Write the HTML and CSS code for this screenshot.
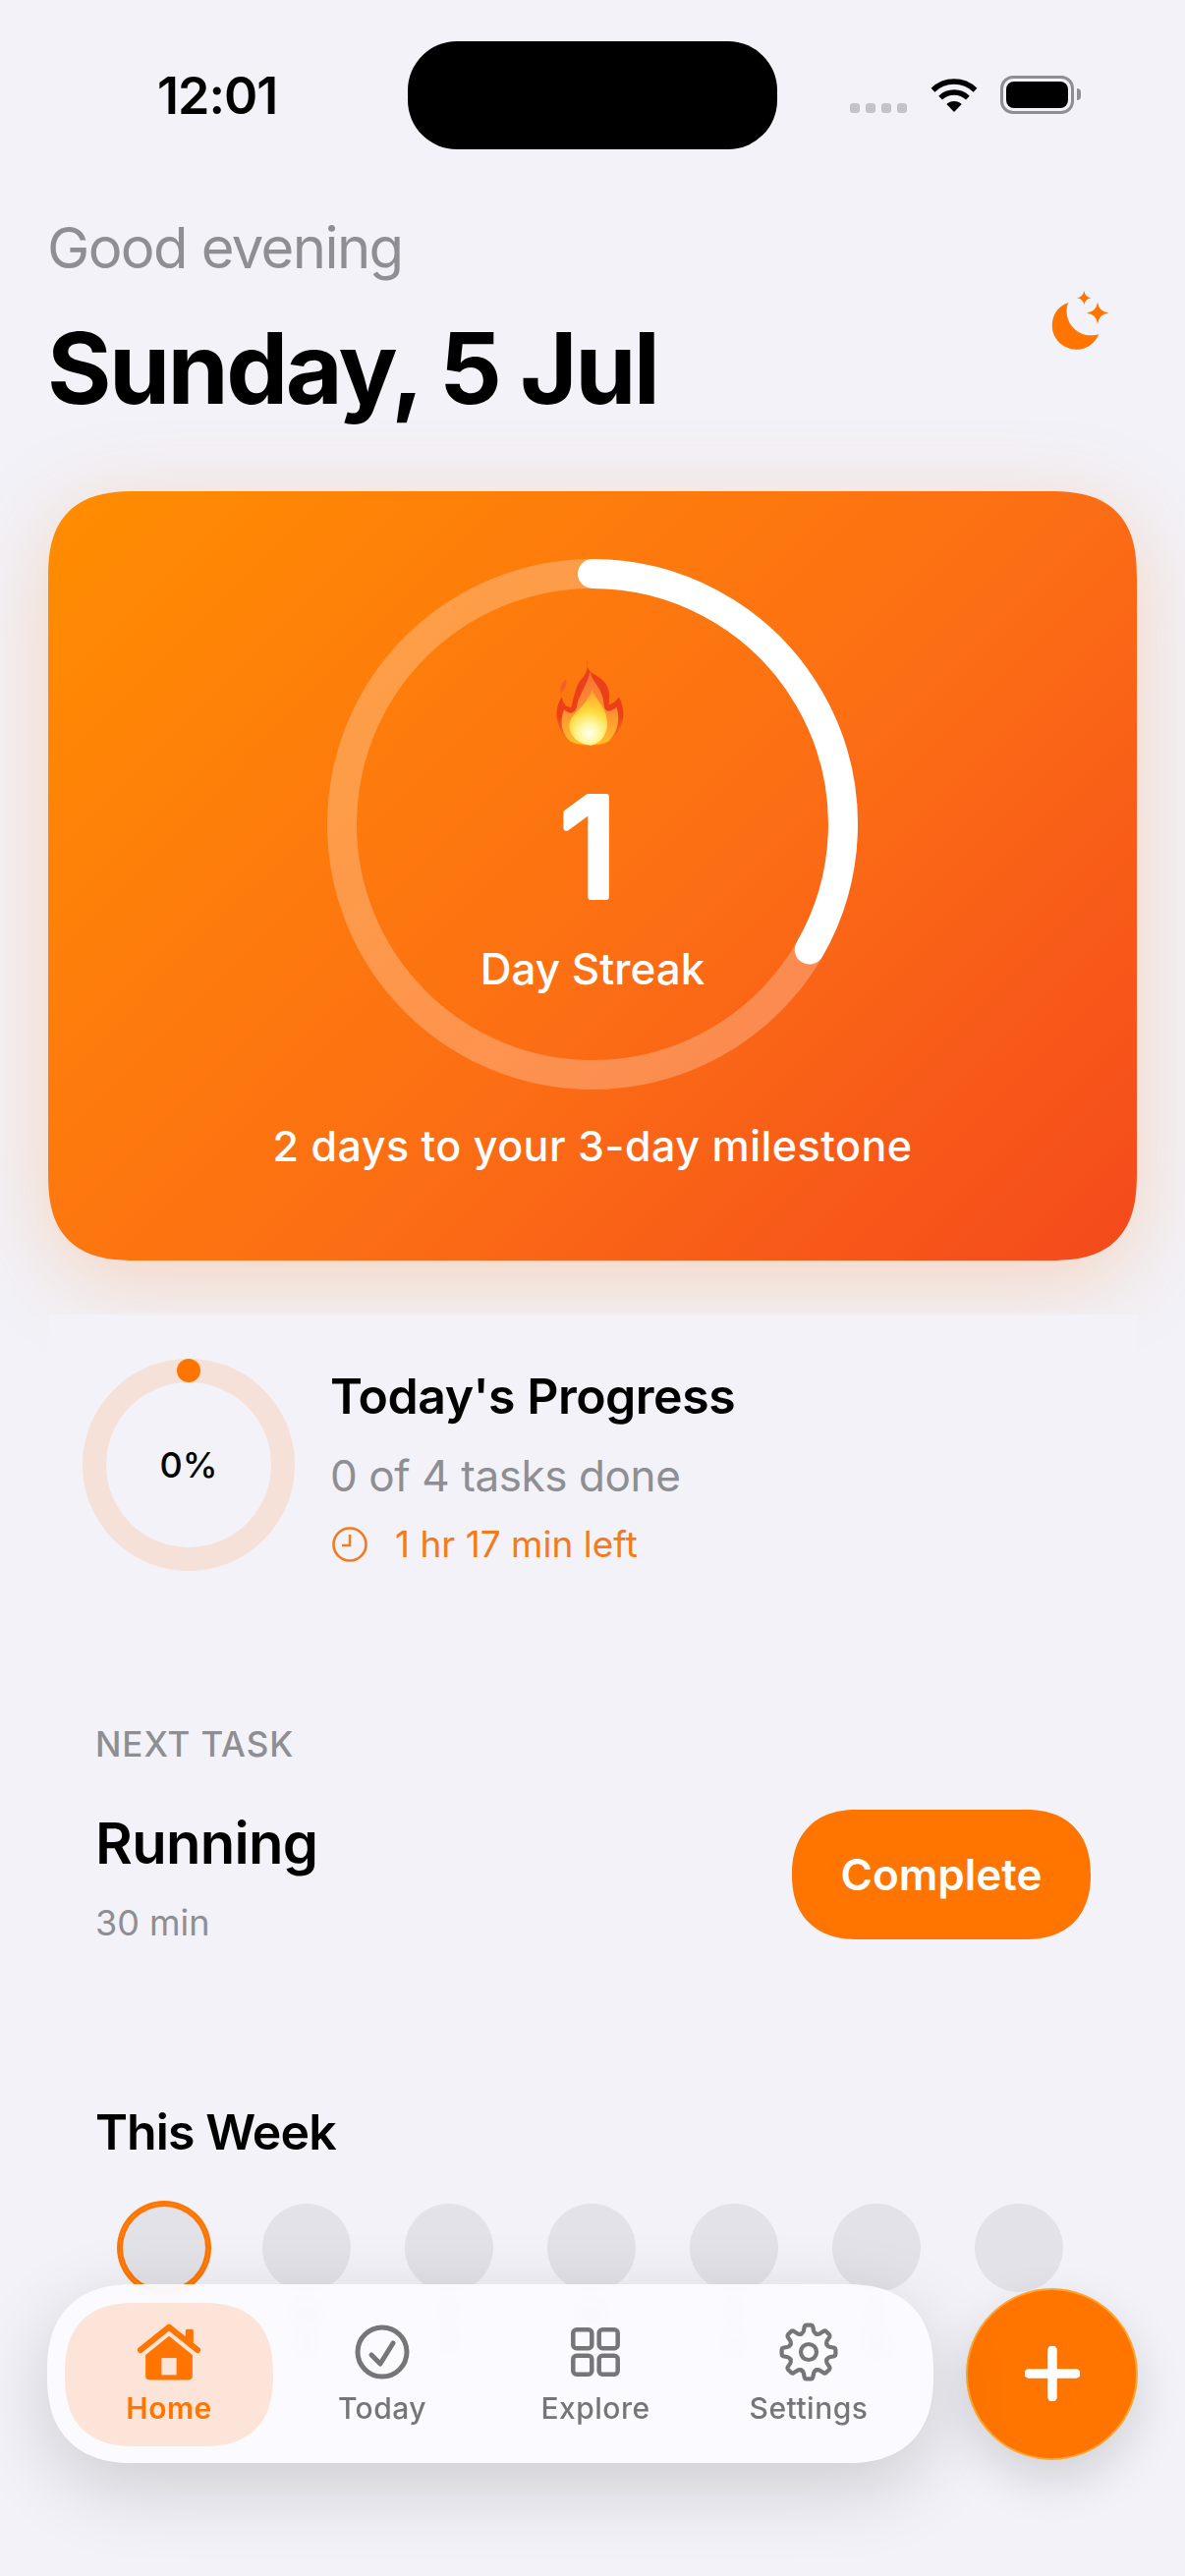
FILE: index.html
```html
<!DOCTYPE html>
<html lang="en">
<head>
<meta charset="utf-8">
<title>Home</title>
<link rel="stylesheet" href="styles.css">
</head>
<body>
<div class="screen">
  <div class="status">
    <div class="status-time">12:01</div>
    <div class="island"></div>
    <div class="status-right">
      <div class="signal"><i></i><i></i><i></i><i></i></div>
      <svg class="wifi" viewBox="0 0 52 38"><path d="M4.5 14.7A31 31 0 0 1 47.5 14.7" fill="none" stroke="#000" stroke-width="5.4"/><path d="M12.1 22.6A20 20 0 0 1 39.9 22.6" fill="none" stroke="#000" stroke-width="5.4"/><path d="M26 37L18.3 29.1A11 11 0 0 1 33.7 29.1Z" fill="#000"/></svg>
      <div class="battery"><div class="battery-fill"></div></div>
      <div class="battery-nub"></div>
    </div>
  </div>

  <header class="head">
    <div>
      <div class="greeting">Good evening</div>
      <h1 class="date">Sunday, 5 Jul</h1>
    </div>
    <svg class="moon" viewBox="740 735 185 195"><path d="M795 778C760 790 745 820 745 850C745 890 780 923 820 923C855 923 880 900 890 875C880 880 865 880 850 878C815 870 790 840 790 805C790 795 792 785 795 778Z"/><path d="M886 776Q890 806 920 810Q890 814 886 844Q882 814 852 810Q882 806 886 776Z"/><path d="M844 741Q847 760 866 763Q847 766 844 785Q841 766 822 763Q841 760 844 741Z"/></svg>
  </header>

  <section class="streak">
    <div class="ring">
      <svg class="ring-svg" viewBox="0 0 540 540"><circle cx="270" cy="270" r="255" fill="none" stroke="rgba(255,255,255,.25)" stroke-width="30"/><path d="M270 15A255 255 0 0 1 490.8 397.5" fill="none" stroke="#fff" stroke-width="30" stroke-linecap="round"/></svg>
      <div class="ring-inner">
        <svg class="flame" viewBox="0 0 330 330">
          <defs>
            <linearGradient id="fo" x1="0" y1="0" x2="0" y2="1"><stop offset="0" stop-color="#e8401a"/><stop offset=".65" stop-color="#ee3f18"/><stop offset="1" stop-color="#ff8a1a"/></linearGradient>
            <linearGradient id="fm" x1="0" y1="0" x2="0" y2="1"><stop offset="0" stop-color="#fb6f30"/><stop offset=".55" stop-color="#fd8f34"/><stop offset="1" stop-color="#ffc02a"/></linearGradient>
            <radialGradient id="fi" gradientUnits="userSpaceOnUse" cx="155" cy="258" r="125"><stop offset="0" stop-color="#fffff2"/><stop offset=".25" stop-color="#fff8a0"/><stop offset=".55" stop-color="#ffd83a"/><stop offset="1" stop-color="#fda52c"/></radialGradient>
          </defs>
          <path fill="url(#fo)" d="M150 35C145 60 155 70 175 82C205 100 222 120 215 172C225 170 240 160 245 148C262 180 268 215 240 262C225 290 190 298 160 298C120 298 85 290 68 250C50 215 52 175 72 148C75 170 85 180 100 180C108 150 115 105 135 90C145 78 152 60 150 35Z"/>
          <path fill="url(#fm)" d="M158 68C160 100 196 120 199 165C201 192 212 200 238 180C252 215 240 262 212 284C190 297 125 297 98 284C70 262 64 222 78 187C98 205 115 198 118 172C122 145 150 110 158 68Z"/>
          <path fill="url(#fi)" d="M165 120C165 150 208 175 210 225C212 262 192 288 160 296C125 294 92 268 94 232C97 200 155 170 165 120Z"/>
          <path fill="#f4602a" d="M85 93C88 110 80 130 68 136C62 120 72 103 85 93Z"/>
        </svg>
        <svg class="streak-num" viewBox="0 0 120 200"><text x="56" y="163">1</text></svg>
        <div class="streak-label">Day Streak</div>
      </div>
    </div>
    <p class="milestone">2 days to your 3-day milestone</p>
  </section>

  <section class="progress">
    <div class="p-ring">
      <svg class="p-ring-svg" viewBox="0 0 216 216"><circle cx="108" cy="108" r="96" fill="none" stroke="#f5e1d8" stroke-width="24"/><circle cx="108" cy="12" r="12" fill="#ff7500"/></svg>
      <div class="p-pct">0%</div>
    </div>
    <div class="p-text">
      <div class="p-title">Today's Progress</div>
      <div class="p-sub">0 of 4 tasks done</div>
      <div class="p-left">
        <svg class="clock" viewBox="0 0 36 36"><circle cx="18" cy="18" r="16.5" fill="none" stroke="#f5791f" stroke-width="2.6"/><path d="M18 8V19H10" fill="none" stroke="#f5791f" stroke-width="2.4"/></svg>
        <span>1 hr 17 min left</span>
      </div>
    </div>
  </section>

  <section class="next">
    <div class="next-label">NEXT TASK</div>
    <div class="next-row">
      <div>
        <div class="next-name">Running</div>
        <div class="next-time">30 min</div>
      </div>
      <div class="complete">Complete</div>
    </div>
  </section>

  <section class="week">
    <h2 class="section-title">This Week</h2>
    <div class="days">
      <div class="day"><div class="dot dot-today"></div><div class="day-l">S</div><div class="day-n">5</div></div>
      <div class="day"><div class="dot"></div><div class="day-l">M</div><div class="day-n">6</div></div>
      <div class="day"><div class="dot"></div><div class="day-l">T</div><div class="day-n">7</div></div>
      <div class="day"><div class="dot"></div><div class="day-l">W</div><div class="day-n">8</div></div>
      <div class="day"><div class="dot"></div><div class="day-l">T</div><div class="day-n">9</div></div>
      <div class="day"><div class="dot"></div><div class="day-l">F</div><div class="day-n">10</div></div>
      <div class="day"><div class="dot"></div><div class="day-l">S</div><div class="day-n">11</div></div>
    </div>
    <h2 class="section-title after">Averages</h2>
  </section>

  <div class="dock">
    <nav class="nav">
      <div class="nav-item active">
        <svg class="nav-icon" viewBox="0 0 65 58"><path d="M4 27L32.5 4L61 27" fill="none" stroke="#ff7500" stroke-width="6" stroke-linecap="round" stroke-linejoin="round"/><rect x="49" y="6" width="8" height="15" rx="2" fill="#ff7500"/><path d="M9 32L32.5 13L56 32V53A4 4 0 0 1 52 57H13A4 4 0 0 1 9 53Z" fill="#ff7500"/><rect x="25" y="35" width="15" height="17" fill="#fce5d8"/></svg>
        <span>Home</span>
      </div>
      <div class="nav-item">
        <svg class="nav-icon" viewBox="0 0 60 60"><circle cx="30" cy="30" r="25" fill="none" stroke="#76767a" stroke-width="5"/><path d="M19 33L28 42L41 21" fill="none" stroke="#76767a" stroke-width="5" stroke-linecap="round" stroke-linejoin="round"/></svg>
        <span>Today</span>
      </div>
      <div class="nav-item">
        <svg class="nav-icon" viewBox="0 0 60 60"><g fill="none" stroke="#76767a" stroke-width="4.5"><rect x="7.3" y="7.3" width="19" height="19" rx="3.5"/><rect x="33.7" y="7.3" width="19" height="19" rx="3.5"/><rect x="7.3" y="33.7" width="19" height="19" rx="3.5"/><rect x="33.7" y="33.7" width="19" height="19" rx="3.5"/></g></svg>
        <span>Explore</span>
      </div>
      <div class="nav-item">
        <svg class="nav-icon" viewBox="-30 -30 60 60"><defs><path id="tooth" d="M-7.6 -18.4Q-5.6 -19.6 -5.2 -21.2L-4.2 -26A2 2 0 0 1 -2.4 -27.4H2.4A2 2 0 0 1 4.2 -26L5.2 -21.2Q5.6 -19.6 7.6 -18.4"/></defs><g fill="none" stroke="#76767a" stroke-width="4.2" stroke-linecap="round" stroke-linejoin="round"><use href="#tooth"/><use href="#tooth" transform="rotate(45)"/><use href="#tooth" transform="rotate(90)"/><use href="#tooth" transform="rotate(135)"/><use href="#tooth" transform="rotate(180)"/><use href="#tooth" transform="rotate(225)"/><use href="#tooth" transform="rotate(270)"/><use href="#tooth" transform="rotate(315)"/><circle r="8"/></g></svg>
        <span>Settings</span>
      </div>
    </nav>
    <div class="fab"><svg class="plus" viewBox="0 0 56 56"><path d="M28 4V52M4 28H52" fill="none" stroke="#fff" stroke-width="9.5" stroke-linecap="round"/></svg></div>
  </div>
</div>
</body>
</html>
```
FILE: styles.css
```css
* { box-sizing: border-box; }
html, body { margin: 0; padding: 0; }
body { width: 1206px; height: 2622px; overflow: hidden; background: #f2f2f8; font-family: Inter, "Liberation Sans", sans-serif; color: #000; }
.screen { position: relative; width: 1206px; height: 2622px; overflow: hidden; }

.status { display: flex; align-items: center; height: 110px; margin-top: 42px; padding-left: 160px; }
.status-time { width: 255px; font-size: 52px; font-weight: 600; letter-spacing: -1px; line-height: 60px; margin-top: 2px; }
.island { width: 376px; height: 110px; border-radius: 50px; background: #000; }
.status-right { display: flex; align-items: flex-start; margin-left: 74px; height: 38px; margin-top: -2px; }
.signal { display: flex; gap: 6px; margin-top: 28px; margin-right: 22px; }
.signal i { display: block; width: 10px; height: 10px; border-radius: 3px; background: #c4c4c8; }
.wifi { width: 52px; height: 38px; margin-right: 21px; }
.battery { width: 75px; height: 39px; border: 3px solid #8e8e93; border-radius: 13px; padding: 3px; }
.battery-fill { width: 100%; height: 100%; background: #000; border-radius: 8px; }
.battery-nub { width: 4px; height: 12px; margin: 13px 0 0 3px; background: #8e8e93; border-radius: 0 4px 4px 0; }

.head { display: flex; justify-content: space-between; padding: 65px 76px 0 48px; }
.greeting { font-size: 58px; line-height: 70px; color: #8e8e93; letter-spacing: -1.6px; }
.date { margin: 27px 0 0; font-size: 100px; font-weight: 700; line-height: 121px; letter-spacing: -2.6px; }
.moon { width: 61px; height: 64px; fill: #ff7500; margin-top: 77px; }

.streak { width: 1108px; height: 783px; margin: 65px 0 0 49px; padding-top: 69px; border-radius: 90px; corner-shape: superellipse(1.4); background: linear-gradient(135deg, #ff8d00 0%, #fc6f14 55%, #f4491c 100%); box-shadow: 0 20px 90px rgba(255,120,20,.25); color: #fff; }
.ring { display: grid; width: 540px; height: 540px; margin: 0 auto; }
.ring-svg, .ring-inner { grid-area: 1 / 1; }
.ring-svg { width: 540px; height: 540px; display: block; }
.ring-inner { display: flex; flex-direction: column; align-items: center; padding-top: 91px; }
.flame { width: 110px; height: 110px; display: block; }
.streak-num { width: 120px; height: 200px; margin: -20px 0 -30px; display: block; }
.streak-num text { font-family: Inter, sans-serif; font-size: 140px; font-weight: 500; fill: #fff; stroke: #fff; stroke-width: 6px; stroke-linejoin: round; text-anchor: middle; }
.streak-label { margin-top: 36px; font-size: 44px; font-weight: 500; line-height: 60px; }
.milestone { margin: 27px 0 0; text-align: center; font-size: 43px; font-weight: 500; line-height: 60px; letter-spacing: 0.5px; }

.progress { position: relative; display: flex; align-items: flex-start; gap: 36px; width: 1108px; margin: 55px 0 0 49px; padding: 45px 35px; background: #f2f2f8; }
.p-ring { display: grid; place-items: center; width: 216px; height: 216px; flex: none; }
.p-ring-svg, .p-pct { grid-area: 1 / 1; }
.p-ring-svg { width: 216px; height: 216px; display: block; }
.p-pct { font-size: 36px; font-weight: 500; }
.p-text { margin-top: 8px; }
.p-title { font-size: 50px; font-weight: 600; line-height: 60px; letter-spacing: -0.5px; }
.p-sub { font-size: 44px; line-height: 56px; color: #8e8e93; margin-top: 23px; letter-spacing: -0.4px; }
.p-left { display: flex; align-items: center; gap: 28px; margin: 20px 0 0 2px; font-size: 37px; line-height: 44px; color: #f5791f; }
.clock { width: 36px; height: 36px; display: block; }

.next { padding: 0 96px 0 97px; position: relative; margin-top: 110px; }
.next-label { font-size: 35px; font-weight: 500; line-height: 42px; color: #8e8e93; letter-spacing: 0.9px; }
.next-row { display: flex; justify-content: space-between; align-items: center; margin-top: 44px; }
.next-name { font-size: 58px; font-weight: 600; line-height: 72px; letter-spacing: -0.7px; }
.next-time { font-size: 36px; line-height: 44px; color: #8e8e93; margin-top: 23px; }
.complete { width: 304px; height: 132px; margin-top: -3px; border-radius: 66px; corner-shape: superellipse(1.2); background: #ff7500; color: #fff; font-size: 44px; font-weight: 600; display: flex; align-items: center; justify-content: center; }

.week { padding-left: 97px; margin-top: 161px; }
.section-title { margin: 0; font-size: 50px; font-weight: 600; line-height: 60px; letter-spacing: -0.9px; }
.section-title.after { margin-top: 215px; }
.days { display: flex; gap: 55px; margin: 43px 0 0 25px; }
.day { width: 90px; display: flex; flex-direction: column; align-items: center; }
.dot { width: 90px; height: 90px; border-radius: 50%; background: #e2e2e8; }
.dot-today { box-shadow: 0 0 0 3px #ff7500, inset 0 0 0 3px #ff7500; }
.day-l, .day-n { font-size: 28px; line-height: 30px; font-weight: 500; color: #8e8e93; }
.day-l { margin-top: 8px; }

.dock { position: absolute; left: 48px; top: 2325px; display: flex; align-items: center; gap: 33px; }
.nav { display: flex; gap: 5px; width: 902px; height: 182px; padding: 19px 18px; border-radius: 91px; corner-shape: superellipse(1.3); background: rgba(251,251,255,.94); backdrop-filter: blur(8px); box-shadow: 0 24px 80px rgba(0,0,0,.16); }
.nav-item { width: 212px; height: 146px; border-radius: 72px; corner-shape: superellipse(1.3); display: flex; flex-direction: column; align-items: center; padding-top: 20px; font-size: 30px; font-weight: 500; line-height: 38px; letter-spacing: 0.5px; color: #76767a; }
.nav-item.active { background: #fce5d8; color: #ff7500; font-weight: 600; }
.nav-icon { height: 60px; width: 66px; display: block; margin-bottom: 8px; }
.fab { width: 175px; height: 175px; border-radius: 50%; background: #ff7500; border: 2px solid #ffa52e; display: flex; align-items: center; justify-content: center; box-shadow: 0 20px 50px rgba(0,0,0,.14); }
.plus { width: 56px; height: 56px; display: block; }
```
